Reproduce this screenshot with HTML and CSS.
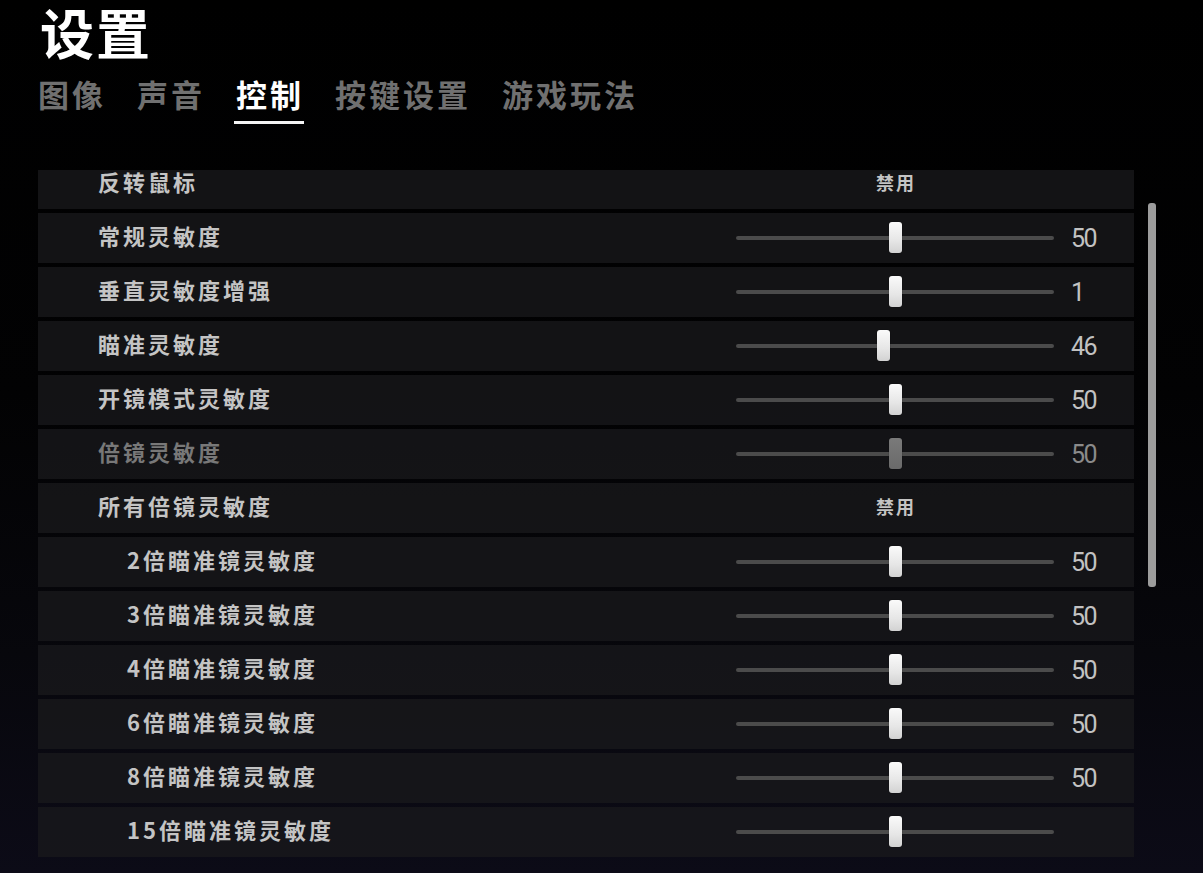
FILE: index.html
```html
<!DOCTYPE html>
<html lang="zh-CN">
<head>
<meta charset="utf-8">
<title>设置</title>
<link rel="stylesheet" href="styles.css">
</head>
<body>
<div class="page">
  <h1 class="title">设置</h1>
  <nav class="tabs">
    <span class="tab">图像</span>
    <span class="tab">声音</span>
    <span class="tab active">控制</span>
    <span class="tab">按键设置</span>
    <span class="tab">游戏玩法</span>
  </nav>
  <div class="panel">
    <div class="list">
      <div class="row clipped">
        <div class="label">反转鼠标</div>
        <div class="control"><span class="toggle">禁用</span></div>
        <div class="value"></div>
      </div>
      <div class="row">
        <div class="label">常规灵敏度</div>
        <div class="control"><div class="slider"><div class="track"></div><div class="thumb" style="left:50%"></div></div></div>
        <div class="value">50</div>
      </div>
      <div class="row">
        <div class="label">垂直灵敏度增强</div>
        <div class="control"><div class="slider"><div class="track"></div><div class="thumb" style="left:50%"></div></div></div>
        <div class="value">1</div>
      </div>
      <div class="row">
        <div class="label">瞄准灵敏度</div>
        <div class="control"><div class="slider"><div class="track"></div><div class="thumb" style="left:46.3%"></div></div></div>
        <div class="value">46</div>
      </div>
      <div class="row">
        <div class="label">开镜模式灵敏度</div>
        <div class="control"><div class="slider"><div class="track"></div><div class="thumb" style="left:50%"></div></div></div>
        <div class="value">50</div>
      </div>
      <div class="row disabled">
        <div class="label">倍镜灵敏度</div>
        <div class="control"><div class="slider"><div class="track"></div><div class="thumb" style="left:50%"></div></div></div>
        <div class="value">50</div>
      </div>
      <div class="row">
        <div class="label">所有倍镜灵敏度</div>
        <div class="control"><span class="toggle">禁用</span></div>
        <div class="value"></div>
      </div>
      <div class="row sub">
        <div class="label">2倍瞄准镜灵敏度</div>
        <div class="control"><div class="slider"><div class="track"></div><div class="thumb" style="left:50%"></div></div></div>
        <div class="value">50</div>
      </div>
      <div class="row sub">
        <div class="label">3倍瞄准镜灵敏度</div>
        <div class="control"><div class="slider"><div class="track"></div><div class="thumb" style="left:50%"></div></div></div>
        <div class="value">50</div>
      </div>
      <div class="row sub">
        <div class="label">4倍瞄准镜灵敏度</div>
        <div class="control"><div class="slider"><div class="track"></div><div class="thumb" style="left:50%"></div></div></div>
        <div class="value">50</div>
      </div>
      <div class="row sub">
        <div class="label">6倍瞄准镜灵敏度</div>
        <div class="control"><div class="slider"><div class="track"></div><div class="thumb" style="left:50%"></div></div></div>
        <div class="value">50</div>
      </div>
      <div class="row sub">
        <div class="label">8倍瞄准镜灵敏度</div>
        <div class="control"><div class="slider"><div class="track"></div><div class="thumb" style="left:50%"></div></div></div>
        <div class="value">50</div>
      </div>
      <div class="row sub">
        <div class="label">15倍瞄准镜灵敏度</div>
        <div class="control"><div class="slider"><div class="track"></div><div class="thumb" style="left:50%"></div></div></div>
        <div class="value"></div>
      </div>
    </div>
    <div class="scrollbar"></div>
  </div>
</div>
</body>
</html>
```
FILE: styles.css
```css
* { box-sizing: border-box; }

html, body {
  margin: 0;
  padding: 0;
  height: 100%;
}

body {
  background: linear-gradient(180deg, #000000 0%, #020203 45%, #07070c 75%, #0c0b17 100%);
  font-family: "Noto Sans CJK SC", "Noto Sans", sans-serif;
  color: #c8c8c8;
  overflow: hidden;
}

.page {
  padding-left: 38px;
  width: 1203px;
  height: 873px;
}

.title {
  margin: 0;
  padding-left: 2px;
  font-size: 54px;
  line-height: 64px;
  font-weight: 700;
  color: #ffffff;
  letter-spacing: 2px;
}

.tabs {
  display: flex;
  gap: 31px;
  margin-top: 8px;
  height: 57px;
}

.tab {
  position: relative;
  font-size: 31px;
  line-height: 44px;
  font-weight: 700;
  color: #707070;
  letter-spacing: 3px;
  height: 44px;
}

.tab.active {
  color: #ffffff;
}

.tab.active::after {
  content: "";
  position: absolute;
  left: -2px;
  right: 0;
  bottom: -8px;
  height: 3px;
  background: #f4f4f4;
}

.panel {
  display: flex;
  margin-top: 41px;
}

.list {
  width: 1096px;
  display: flex;
  flex-direction: column;
  gap: 4px;
}

.row {
  display: flex;
  align-items: center;
  height: 50px;
  background: rgba(26, 26, 28, 0.75);
}

.row.clipped {
  height: 39px;
  padding-bottom: 11px;
}

.row.clipped .control {
  height: 28px;
}

.label {
  flex: 1;
  padding-left: 60px;
  padding-bottom: 6px;
  font-size: 22px;
  line-height: 26px;
  font-weight: 700;
  letter-spacing: 3px;
  color: #c4c4c4;
  white-space: nowrap;
}

.row.sub .label {
  padding-left: 89px;
}

.control {
  width: 318px;
  height: 50px;
  display: flex;
  align-items: center;
  justify-content: center;
}

.toggle {
  font-size: 18px;
  line-height: 24px;
  padding-bottom: 4px;
  font-weight: 700;
  letter-spacing: 2px;
  color: #c4c4c4;
  padding-left: 2px;
}

.slider {
  position: relative;
  width: 318px;
  height: 32px;
}

.track {
  position: absolute;
  left: 0;
  right: 0;
  top: 14px;
  height: 4px;
  border-radius: 2px;
  background: #4b4b4b;
}

.thumb {
  position: absolute;
  top: 0;
  width: 13px;
  height: 31px;
  margin-left: -6px;
  border-radius: 3px;
  background: linear-gradient(180deg, #fafafa 0%, #e6e6e6 60%, #d2d2d2 100%);
  box-shadow: 0 0 1px rgba(0, 0, 0, 0.8);
}

.value {
  width: 80px;
  padding-left: 17px;
  padding-top: 2px;
  font-family: "Roboto", "Liberation Sans", sans-serif;
  font-size: 25px;
  line-height: 30px;
  letter-spacing: -1.5px;
  color: #c2c2c2;
}

.row.disabled .label {
  color: #787878;
}

.row.disabled .thumb {
  background: linear-gradient(180deg, #7a7a7a 0%, #6a6a6a 100%);
}

.row.disabled .value {
  color: #8a8a8a;
}

.scrollbar {
  width: 8px;
  height: 384px;
  margin-top: 33px;
  margin-left: 14px;
  border-radius: 3px;
  background: #9c9c9c;
}
```
